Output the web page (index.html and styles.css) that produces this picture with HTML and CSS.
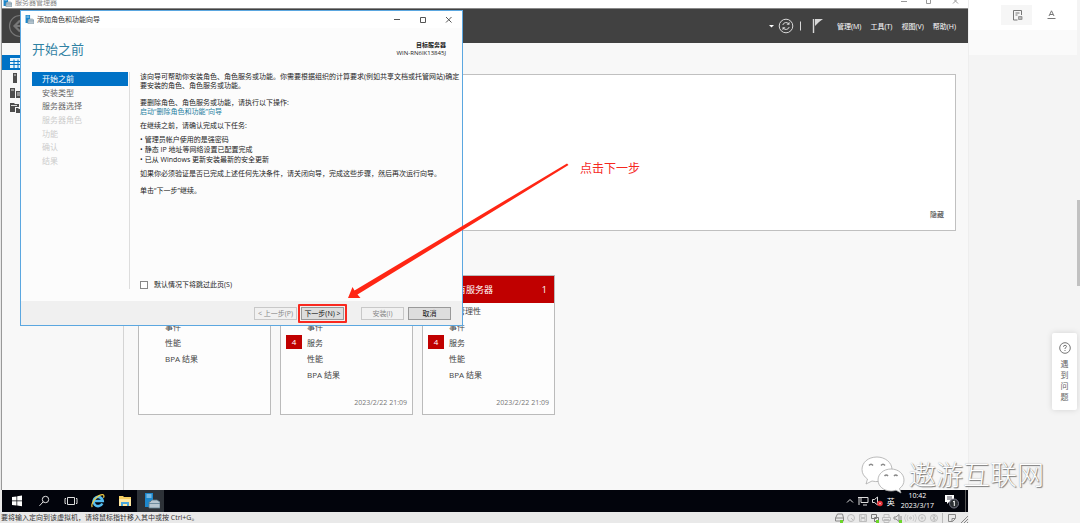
FILE: index.html
```html
<!DOCTYPE html>
<html lang="zh-CN">
<head>
<meta charset="utf-8">
<title>服务器管理器</title>
<link rel="stylesheet" href="styles.css">
</head>
<body>
<svg class="defs" aria-hidden="true">
  <symbol id="server" viewBox="0 0 16 16">
    <path d="M1 0h8v8H6v6H1z" fill="#1c87cc"/><path d="M2.500 2h5M2.500 4h5" stroke="#cfe9fa"/>
    <path d="M6 9l2-2h5l3 2v6H5V9z" fill="#b7c7d1" stroke="#5d7d90" stroke-width=".8"/><path d="M5 10.500h11" stroke="#5d7d90" stroke-width=".8"/>
  </symbol>
</svg>
<div class="page">
  <div class="vm">
    <div class="manager">
      <div class="manager-title">
        <svg class="ico10"><use href="#server"/></svg>
        <span class="manager-name">服务器管理器</span>
        <svg class="manager-buttons" viewBox="0 0 60 8" fill="none" stroke="#999"><path d="M1 3.500h6M26.500 0v5.500h4V0M53 5.500l5-5M58 5.500l-5-5"/></svg>
      </div>
      <header class="toolbar">
        <svg class="back" viewBox="0 0 24 24" fill="none" stroke="#777"><circle cx="12" cy="12" r="10.500" stroke-width="1.200"/><path d="M18 12H7M12 6.500L6.500 12l5.500 5.500" stroke-width="2.200"/></svg>
        <svg class="tools" viewBox="0 0 54 16" fill="none" stroke="#d8d8d8">
          <path d="M0 7h5L2.500 9.500z" fill="#fff" stroke="none"/>
          <circle cx="17" cy="8" r="6.800"/>
          <path d="M13.800 7a3.300 3.300 0 0 1 5.700-1.300M20.200 9a3.300 3.300 0 0 1-5.700 1.300"/><path d="M20.500 3.800v3h-3zM13.500 12.200v-3h3z" fill="#d8d8d8" stroke="none"/>
          <path d="M31.500 3.500v9"/>
          <path d="M44.500 1v14" stroke-width="1.400"/><path d="M46 1h8l-4 3-4 4z" fill="#d8d8d8" stroke="none"/>
        </svg>
        <nav class="menu">
          <button>管理(M)</button><button>工具(T)</button><button>视图(V)</button><button>帮助(H)</button>
        </nav>
      </header>
      <div class="manager-body">
        <aside class="rail">
          <button class="rail-item selected" aria-label="仪表板"><svg viewBox="0 0 12 10" fill="#eaf5fc"><path d="M0 0h12v10H0z"/><path d="M0 3.500h12M0 6.500h12M4 1.500V10M8 1.500V10" stroke="#0072c6"/></svg></button>
          <button class="rail-item" aria-label="本地"><svg viewBox="0 0 12 10" fill="#4d4d4d"><path d="M3 0h4v10H3z"/><path d="M4 2h2" stroke="#ddd"/></svg></button>
          <button class="rail-item" aria-label="全部"><svg viewBox="0 0 12 10" fill="#4d4d4d"><path d="M0 0h5v10H0zM6 3h6v7H6z"/><path d="M1 2h3M7 5h4M7 7h4" stroke="#ddd"/></svg></button>
          <button class="rail-item" aria-label="存储"><svg viewBox="0 0 12 10" fill="#4d4d4d"><path d="M0 0h4l1 1h4v3H5v5H0zM6 5h2l1 1h3v4H6z"/><path d="M1 2.500h6" stroke="#ddd"/></svg></button>
        </aside>
        <main class="content">
          <section class="notice"><button class="hide">隐藏</button></section>
          <div class="cards">
            <section class="card">
              <div class="card-head plain"></div>
              <ul><li></li><li>事件</li><li>性能</li><li>BPA 结果</li></ul>
            </section>
            <section class="card">
              <div class="card-head"></div>
              <ul><li></li><li>事件</li><li><b>4</b>服务</li><li>性能</li><li>BPA 结果</li></ul>
              <time>2023/2/22 21:09</time>
            </section>
            <section class="card">
              <div class="card-head"><span>所有服务器</span><span>1</span></div>
              <ul><li>可管理性</li><li>事件</li><li><b>4</b>服务</li><li>性能</li><li>BPA 结果</li></ul>
              <time>2023/2/22 21:09</time>
            </section>
          </div>
        </main>
      </div>
    </div>
    <footer class="taskbar">
      <div class="apps">
        <button aria-label="开始"><svg viewBox="0 0 16 16" fill="#fff"><path d="M3 4l4.500-.6v4.200H3zM8.200 3.300L13 2.600v5H8.200zM3 8.300h4.500v4.200L3 11.900zM8.200 8.300H13v5l-4.800-.7z"/></svg></button>
        <button aria-label="搜索"><svg viewBox="0 0 16 16" fill="none" stroke="#e4e4e4"><circle cx="9.500" cy="6.500" r="3.200"/><path d="M7.200 8.800L3.500 12.800"/></svg></button>
        <button aria-label="任务视图"><svg viewBox="0 0 16 16" fill="none" stroke="#ddd"><path d="M4.500 4.500h7v7h-7zM3 5.500H2v5h1M13 5.500h1v5h-1"/></svg></button>
        <button aria-label="浏览器"><svg viewBox="0 0 16 16" fill="none"><path d="M12.300 10.500A4.600 4.600 0 1 1 12.700 8H4" stroke="#55bdf0" stroke-width="2.600"/><path d="M2.300 14C.5 12 5 3.500 11 1.800c3-.8 3.500 1 2.500 3" stroke="#f4cf45" stroke-width="1.200"/></svg></button>
        <button aria-label="文件"><svg viewBox="0 0 16 16"><path d="M2 3h4l1 1h7v9H2z" fill="#f5cf62"/><path d="M2 6h12v7H2z" fill="#ffe7a0"/><path d="M4 13v-4h8v4h-2v-2H6v2z" fill="#4aa7dc"/></svg></button>
        <button class="active" aria-label="管理器"><svg viewBox="0 0 16 16"><use href="#server"/></svg></button>
      </div>
      <div class="tray">
        <svg class="tray-icons" viewBox="0 0 38 14" fill="none" stroke="#ddd"><path d="M1 8.500l3-3 3 3M15 3.500h7v5h-7zM13 3v8M12 3.500h3M17 11h4M26.500 5.500h2l3-2.500v8l-3-2.500h-2z"/><circle cx="34" cy="9.500" r="2.800" fill="#e3242b" stroke="none"/><path d="M33 8.500l2 2M35 8.500l-2 2" stroke="#fff" stroke-width=".7"/></svg>
        <span class="ime">英</span>
        <time class="clock">10:42<br>2023/3/17</time>
        <svg class="bell" viewBox="0 0 18 16"><path d="M1 2h9v7H5l-2 2V9H1z" fill="#fff"/><path d="M3 4h5M3 6h5" stroke="#223" stroke-width=".8"/><circle cx="10" cy="10.500" r="4.500" fill="#2b2f33" stroke="#778"/><path d="M9 9l1.300-1V13" fill="none" stroke="#fff"/></svg>
      </div>
    </footer>
    <div class="status">
      <span>要将输入定向到该虚拟机，请将鼠标指针移入其中或按 Ctrl+G。</span>
      <svg class="devices" viewBox="0 0 134 10" fill="none" stroke="#bdbdbd">
        <path d="M1.500 5l2-4h5l1 4v3h-8zM1.500 5h8" stroke="#888"/><circle cx="17" cy="5" r="3.500"/><path d="M17 5l2 2M25.500 1.500h7v7h-7zM27 1.500v3h4v-3M27 8.500v-3h4v3"/>
        <path d="M37.500 1.500h5v4h-5zM40.500 4.500h4v4h-4z" stroke="#777"/>
        <path d="M50 4V1.500h5V4M48.500 4.500h8v3h-8zM50 6.500h5v3h-5z"/><path d="M60 4h2l3-2.500v7L62 6h-2zM67 3v4" stroke="#888"/>
        <path d="M74 2q-2 3 0 6M79 2q2 3 0 6M72 1q-3 4 0 8M81 1q3 4 0 8" stroke="#ccc"/><circle cx="76.500" cy="5" r="1"/><circle cx="88" cy="5" r="3.500"/><circle cx="88" cy="5" r="1"/><circle cx="100" cy="5" r="3.500"/><path d="M98.500 3.500l3 3-1.500 1V2l1.500 1.500-3 3"/>
        <path d="M108.500 0v10" stroke="#bbb"/><path d="M114.500 1.500h7v4l-3 3h-4zM121 5.500h-3v3M134 3l-7 7M134 6l-4 4M134 9l-1 1" stroke="#888"/>
        <path d="M6 7h3v3H6zM42 7h3v3h-3zM65 7h3v3h-3z" fill="#6cd52b" stroke="none"/>
      </svg>
    </div>
  </div>
  <aside class="side">
    <div class="side-tools">
      <button class="side-button on" aria-label="文档"><svg viewBox="0 0 12 12" fill="none" stroke="#777"><path d="M10.500 6V1.500h-8v9.500h4M4.500 4h4M4.500 6h2"/><path d="M7.500 7.500h3.500v3H7.500z" stroke="#999"/><path d="M11 9H8"/></svg></button>
      <button class="side-button" aria-label="字体"><svg viewBox="0 0 12 12" fill="none" stroke="#777"><path d="M3 7L5.500 1.800 8 7M4 5.500h3M1.500 9.500h8"/></svg></button>
    </div>
    <div class="side-strip"></div>
    <button class="help"><svg viewBox="0 0 12 12" fill="none" stroke="#777"><circle cx="6" cy="6" r="5.300"/><path d="M4.500 4.800q0-1.500 1.500-1.500t1.500 1.300q0 .8-1.500 1.600v.8M6 8v1"/></svg><span>遇到问题</span></button>
    <div class="scroll-thumb"></div>
  </aside>

  <section class="wizard" role="dialog" aria-labelledby="wizard-title">
    <div class="wizard-title">
      <svg class="ico10"><use href="#server"/></svg>
      <span id="wizard-title">添加角色和功能向导</span>
      <svg class="wizard-buttons" viewBox="0 0 60 8" fill="none" stroke="#555"><path d="M0 3.500h6M26.500 1.500h5v5h-5zM52 1l5.500 5.500M57.500 1L52 6.500"/></svg>
    </div>
    <div class="wizard-head">
      <h1>开始之前</h1>
      <p class="target"><b>目标服务器</b><br>WIN-RN6IK13845J</p>
    </div>
    <div class="wizard-main">
      <ol class="steps">
        <li class="current">开始之前</li><li>安装类型</li><li>服务器选择</li><li class="off">服务器角色</li><li class="off">功能</li><li class="off">确认</li><li class="off">结果</li>
      </ol>
      <div class="copy">
        <p>该向导可帮助你安装角色、角色服务或功能。你需要根据组织的计算要求(例如共享文档或托管网站)确定<br>要安装的角色、角色服务或功能。</p>
        <p>要删除角色、角色服务或功能，请执行以下操作:<br><a href="#">启动“删除角色和功能”向导</a></p>
        <p class="near">在继续之前，请确认完成以下任务:</p>
        <ul class="near"><li>管理员帐户使用的是强密码</li><li>静态 IP 地址等网络设置已配置完成</li><li>已从 Windows 更新安装最新的安全更新</li></ul>
        <p class="tight">如果你必须验证是否已完成上述任何先决条件，请关闭向导，完成这些步骤，然后再次运行向导。</p>
        <p>单击“下一步”继续。</p>
        <label class="skip"><input type="checkbox">默认情况下将跳过此页(S)</label>
      </div>
    </div>
    <div class="wizard-foot">
      <button disabled>&lt; 上一步(P)</button><button class="next">下一步(N) &gt;</button><button class="install" disabled>安装(I)</button><button>取消</button>
    </div>
  </section>

  <svg class="arrow" viewBox="0 0 226 140" fill="#ff2614"><path d="M2 136l4.500-11 2 3.500L221 1.500l1.500 1.500L11.500 132.500l3 3.500z"/></svg>
  <p class="hint">点击下一步</p>
  <div class="watermark">
    <svg viewBox="0 0 46 38" fill="#fff" stroke="#aaa" stroke-width=".8"><path d="M16 1C7 1 1 6.500 1 13.500c0 4 2 7 5.500 9.500L5 28l6-3c9 2.500 20-3 20-11.500C31 6.500 24 1 16 1z"/><path d="M30 13c-7.500 0-13 5-13 11s5.500 11 13 11c2 0 3.500-.3 5-.8l5 2.800-1.500-4.500C41.500 30.500 43 27.500 43 24c0-6-5.500-11-13-11z"/><path d="M8 9.500q2-2.500 4 0M20 9.500q2-2.500 4 0M23.500 20q1.800-2 3.500 0M33 20q1.800-2 3.500 0" fill="none" stroke="#888" stroke-width="1.500"/></svg>
    <span>遨游互联网</span>
  </div>
</div>
</body>
</html>
```

FILE: styles.css
```css
* { box-sizing: border-box; }
body, p, h1, ul, ol { margin: 0; padding: 0; }
body, button, input {
  font-family: "Open Sans", "Noto Sans CJK SC", sans-serif;
  font-size: 7px;
  line-height: 9px;
  color: #333;
}
ul, ol { list-style: none; }
button { border: 0; padding: 0; background: none; white-space: nowrap; }
svg { display: block; flex: none; }
.defs { position: absolute; width: 0; height: 0; }
.ico10 { width: 9px; height: 9px; }

.page { position: relative; display: flex; min-height: 100vh; background: #f4f4f4; overflow: hidden; }
.vm { flex: 1; display: flex; flex-direction: column; background: #e9e9e9; }
.manager { flex: 1; display: flex; flex-direction: column; margin-left: 1px; border-left: 1px solid #999; background: #f8f8f8; }

.manager-title { display: flex; align-items: center; gap: 3px; height: 9px; padding: 0 8px 4px 1px; background: #fff; border-bottom: 1px solid #888; color: #888; }
.manager-name { flex: 1; }
.manager-buttons { width: 60px; height: 8px; }

.toolbar { display: flex; align-items: center; height: 34px; padding: 0 12px 0 6px; background: #414141; }
.back { width: 24px; height: 24px; margin-right: auto; }
.tools { width: 54px; height: 16px; margin-right: 14px; }
.menu { display: flex; gap: 9px; }
.menu button { color: #fff; }

.manager-body { flex: 1; display: flex; }
.rail { width: 122px; padding-top: 12px; border-right: 1px solid #d4d4d4; }
.rail-item { display: flex; align-items: center; width: 100%; height: 15px; padding-left: 8px; }
.rail-item svg { width: 12px; height: 10px; }
.rail-item.selected { background: #0072c6; }

.content { flex: 1; padding: 31px 12px 0 14px; }
.notice { display: flex; align-items: flex-end; justify-content: flex-end; height: 157px; padding: 11px; background: #fff; border: 1px solid #c0c0c0; }
.cards { display: flex; gap: 9px; margin-top: 44px; }
.card { display: flex; flex-direction: column; width: 133px; height: 140px; background: #fdfdfd; border: 1px solid #bbb; color: #444; font-size: 8px; }
.card-head { display: flex; align-items: center; justify-content: space-between; height: 27px; padding: 0 7px 0 25px; background: #c00000; color: #fff; font-size: 9px; }
.card-head.plain { background: #eee; }
.card ul { margin-top: -1px; }
.card li { display: flex; align-items: center; height: 16px; padding-left: 26px; }
.card b { width: 16px; margin: 0 5px 0 -21px; background: #c00000; color: #fff; font-weight: 400; line-height: 14px; text-align: center; }
.card time { margin: auto 5px 7px; text-align: right; font-size: 7px; color: #777; }

.taskbar { display: flex; justify-content: space-between; height: 22px; margin-left: 2px; background: #02040c; }
.apps { display: flex; }
.apps button { display: flex; align-items: center; justify-content: center; width: 27px; padding-left: 2px; }
.apps svg { width: 16px; height: 16px; }
.apps .active { background: #2d3238; }
.tray { display: flex; align-items: center; color: #fff; border-right: 1px solid #555; margin-right: 2px; }
.tray-icons { width: 38px; height: 14px; }
.ime { margin: 0 6px 0 3px; font-size: 8px; }
.clock { text-align: center; line-height: 10px; }
.bell { width: 18px; height: 16px; margin: 0 3px 0 10px; }

.status { display: flex; align-items: center; justify-content: space-between; height: 11px; padding-left: 1px; line-height: 11px; overflow: hidden; }
.devices { width: 134px; height: 10px; }

.side { position: relative; width: 112px; border-left: 1px solid #eee; padding-right: 3px; background: #f4f4f4; }
.side-tools { display: flex; gap: 4px; height: 30px; padding: 5px 0 5px 32px; background: #fff; }
.side-button { display: flex; align-items: center; justify-content: center; width: 31px; height: 20px; }
.side-button.on { background: #f6f6f6; }
.side-button svg { width: 12px; height: 12px; }
.side-strip { height: 25px; background: #fafafa; }
.help { position: absolute; top: 333px; right: 3px; width: 25px; padding: 9px 6px 8px; border-radius: 2px; background: #fff; box-shadow: 0 0 6px #0002; color: #666; font-size: 8px; line-height: 11px; white-space: normal; }
.help svg { width: 12px; height: 12px; margin: 0 auto 4px; }
.help span { display: block; width: 8px; margin: 0 auto; word-break: break-all; }
.scroll-thumb { position: absolute; top: 200px; right: 0; width: 3px; height: 86px; background: #c1c1c1; }

.wizard { position: absolute; top: 10px; left: 20px; width: 443px; height: 316px; display: flex; flex-direction: column; background: #fcfcfc; border: 1px solid #5ba7e0; }
.wizard-title { display: flex; align-items: center; gap: 3px; height: 17px; padding: 0 8px 0 4px; background: #fff; }
.wizard-title span { flex: 1; }
.wizard-buttons { width: 60px; height: 8px; }
.wizard-head { display: flex; justify-content: space-between; height: 44px; padding: 12px 16px 0 11px; }
.wizard-head h1 { font-size: 13px; line-height: 18px; font-weight: 400; color: #2f81a3; }
.target { padding-top: 1px; text-align: right; font-size: 6px; line-height: 8px; color: #222; }
.wizard-main { flex: 1; display: flex; padding: 0 0 12px 11px; }
.steps { width: 98px; display: grid; grid-template-rows: repeat(7, 1fr) 122px; border-right: 1px solid #ddd; font-size: 8px; color: #666; }
.steps li { display: flex; align-items: center; margin-right: 1px; padding-left: 10px; }
.steps .current { background: #0072c6; color: #fff; }
.steps .off { color: #ccc; }
.copy { flex: 1; display: flex; flex-direction: column; padding-left: 10px; color: #222; white-space: nowrap; }
.copy p + p { margin-top: 8px; }
.copy p + .near { margin-top: 5px; }
.copy ul + .tight { margin-top: 4px; }
.copy li { line-height: 10px; }
.copy li::before { content: "•"; margin-right: 2px; }
.copy a { color: #1f7f9f; text-decoration: none; }
.skip { display: flex; align-items: center; gap: 6px; margin-top: auto; }
.skip input { appearance: none; width: 8px; height: 8px; margin: 0; border: 1px solid #888; background: #fff; }
.wizard-foot { display: flex; justify-content: flex-end; gap: 4px; height: 24px; padding: 6px 11px 5px; background: #f0f0f0; }
.wizard-foot button { position: relative; width: 43px; border: 1px solid #999; background: #ddd; color: #111; line-height: 9px; }
.wizard-foot button:disabled { border-color: #c8c8c8; background: #f1f1f1; color: #888; }
.wizard-foot .install { margin-left: 13px; }
.wizard-foot .next::after { content: ""; position: absolute; inset: -4px; border: 2px solid #f9291f; border-radius: 1px; }

.arrow { position: absolute; top: 162px; left: 346px; width: 226px; height: 140px; }
.hint { position: absolute; top: 161px; left: 580px; font-size: 12px; line-height: 16px; color: #f5291f; }
.watermark { position: absolute; right: 36px; bottom: 29px; display: flex; align-items: center; gap: 2px; color: #fff; font-size: 27px; font-weight: 300; line-height: 38px; text-shadow: 1px 1px 1px #777, 0 0 1px #999; }
.watermark svg { width: 46px; height: 38px; }
```
